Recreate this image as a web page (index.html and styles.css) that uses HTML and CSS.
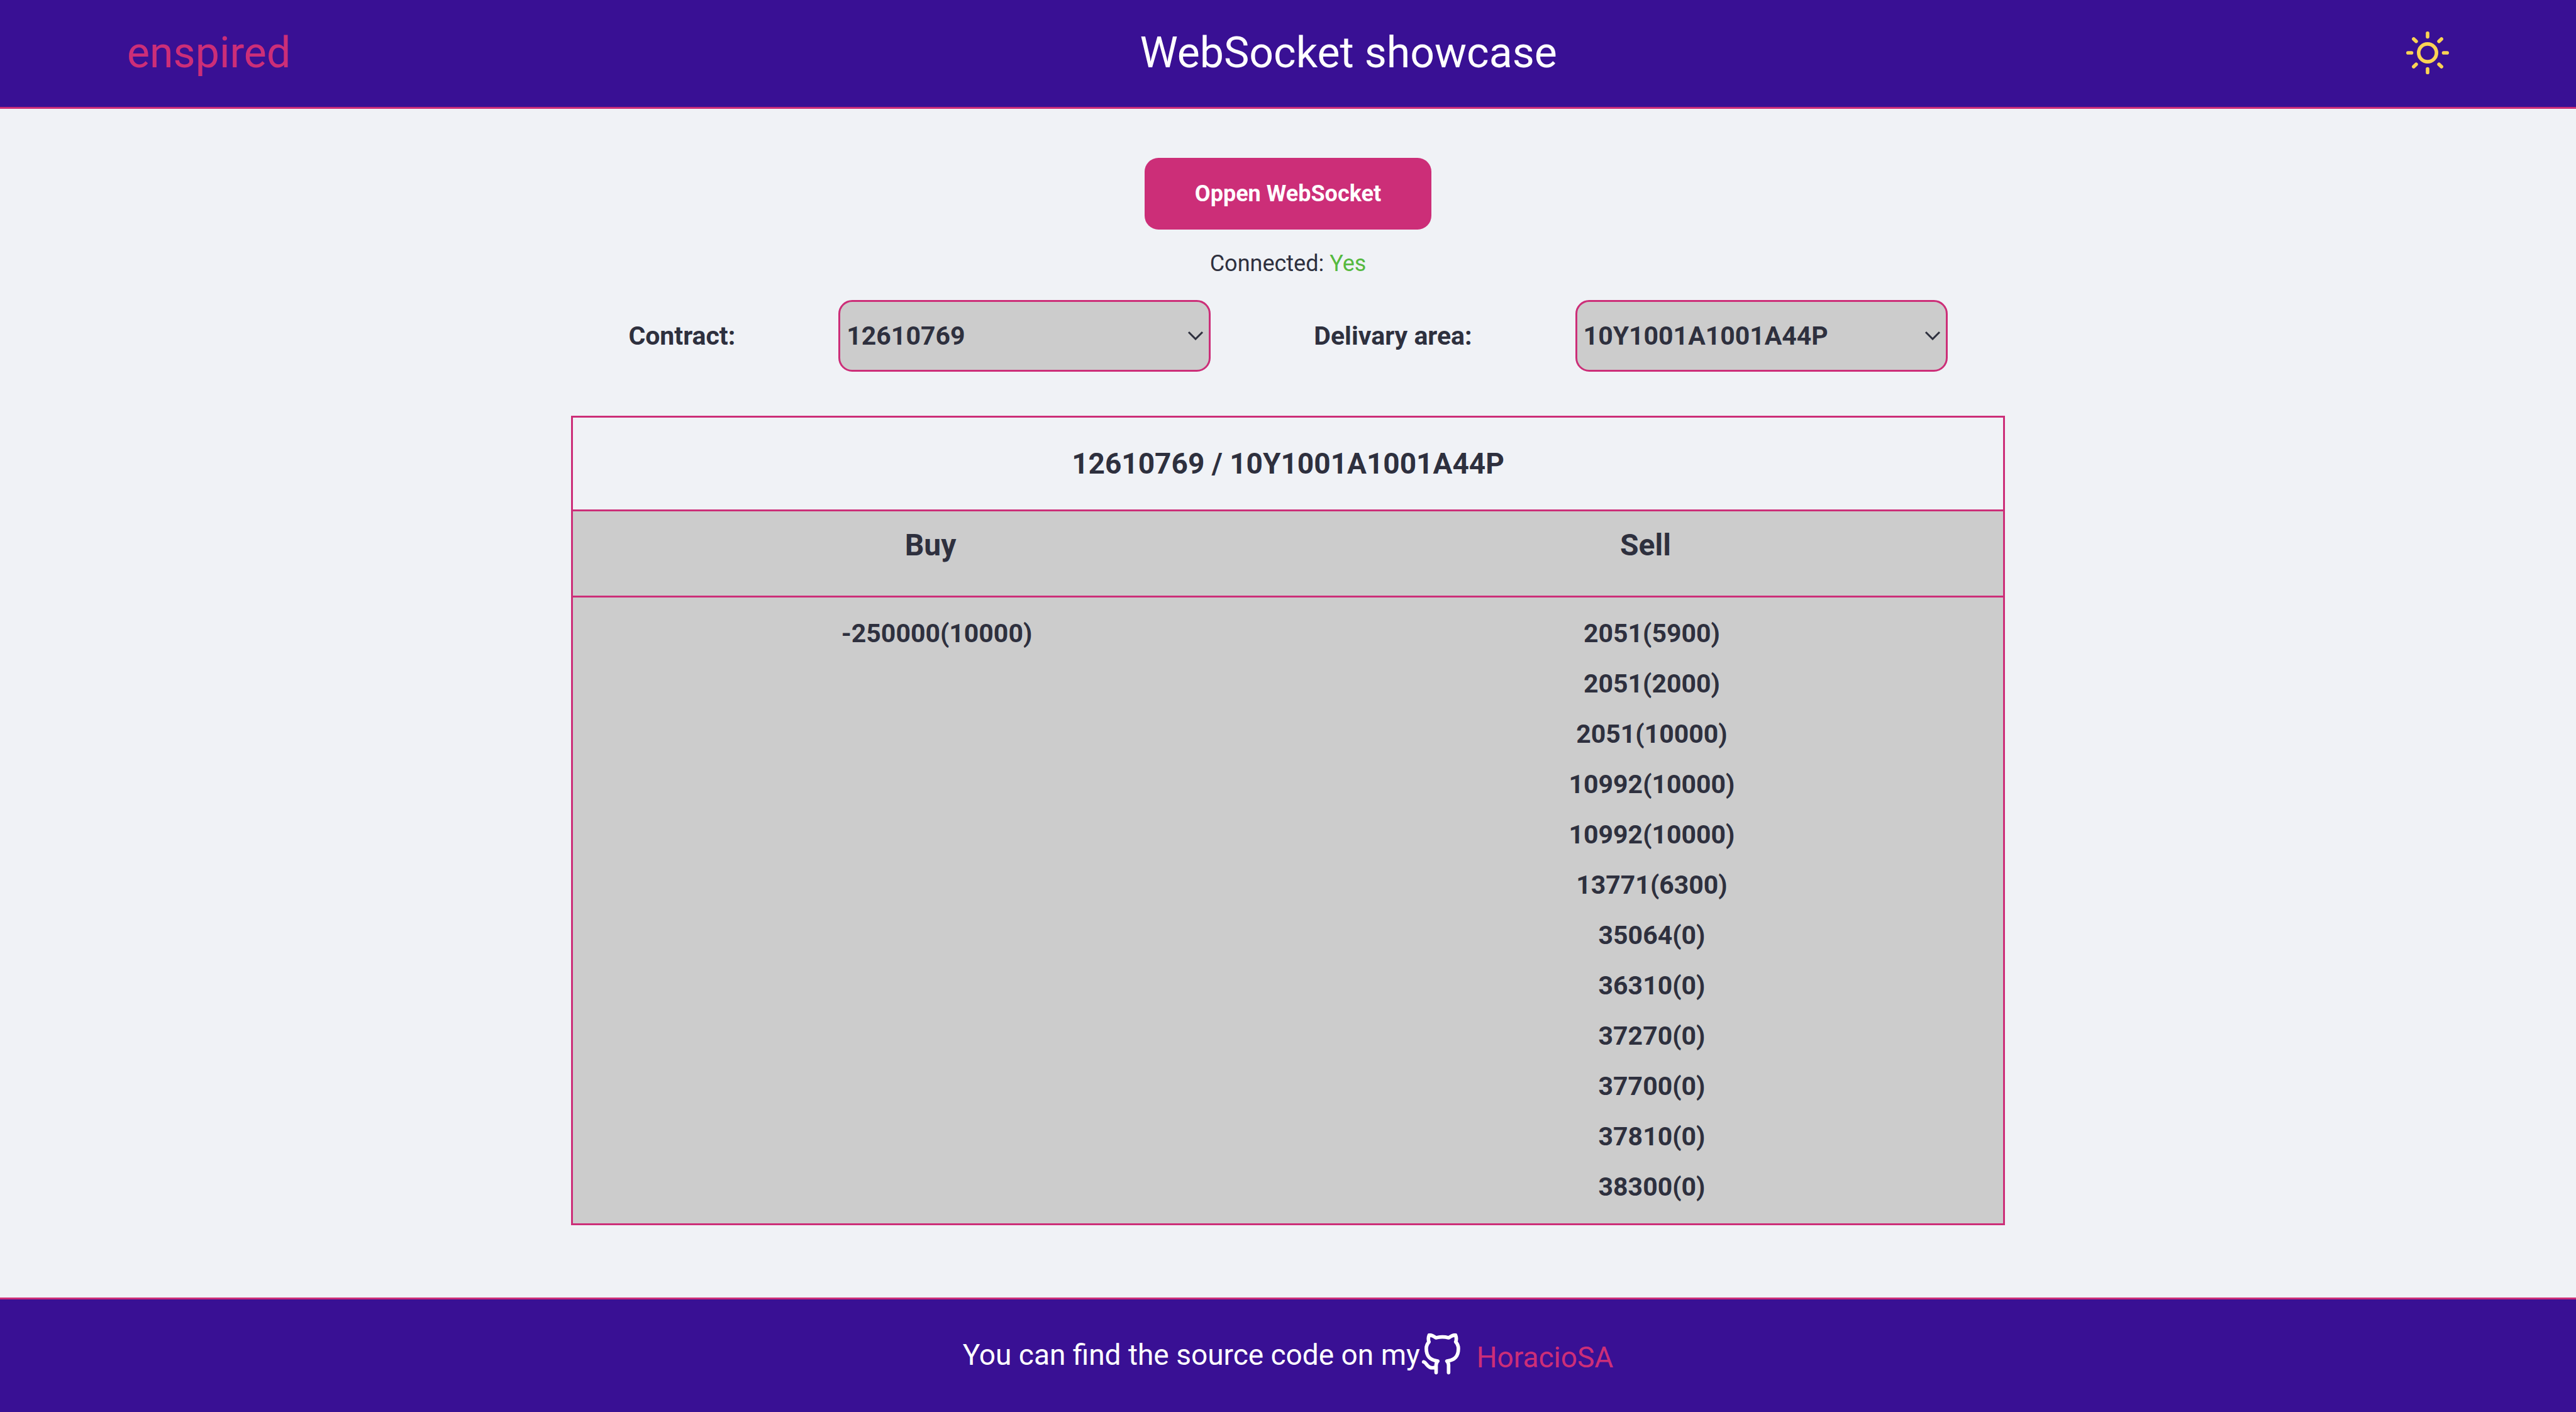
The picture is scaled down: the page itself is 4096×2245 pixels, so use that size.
FILE: index.html
```html
<!DOCTYPE html>
<html lang="en">
<head>
<meta charset="utf-8">
<meta name="viewport" content="width=device-width, initial-scale=1">
<title>WebSocket showcase</title>
<link rel="stylesheet" href="styles.css">
</head>
<body>
<header class="header">
  <a class="brand" href="#">enspired</a>
  <h1 class="title">WebSocket showcase</h1>
  <button class="theme" type="button" aria-label="Toggle theme">
    <svg class="sun" viewBox="0 0 24 24" fill="none" stroke="currentColor" stroke-width="2" stroke-linecap="round" aria-hidden="true">
      <circle cx="12" cy="12" r="5"/>
      <path d="M12 1v2M12 21v2M1 12h2M21 12h2M4.2 4.2l1.4 1.4M18.4 18.4l1.4 1.4M4.2 19.8l1.4-1.4M18.4 5.6l1.4-1.4"/>
    </svg>
  </button>
</header>
<main class="main">
  <button class="open" type="button">Oppen WebSocket</button>
  <p class="status">Connected: <span class="yes">Yes</span></p>
  <form class="filters">
    <label class="label" for="contract">Contract:</label>
    <div class="picker">
      <select class="select" id="contract"><option>12610769</option></select>
      <svg class="chevron" viewBox="0 0 28 16" aria-hidden="true"><path d="M3 3l11 11L25 3"/></svg>
    </div>
    <label class="label" for="area">Delivary area:</label>
    <div class="picker">
      <select class="select" id="area"><option>10Y1001A1001A44P</option></select>
      <svg class="chevron" viewBox="0 0 28 16" aria-hidden="true"><path d="M3 3l11 11L25 3"/></svg>
    </div>
  </form>
  <table class="book">
    <caption class="caption">12610769 / 10Y1001A1001A44P</caption>
    <thead>
      <tr><th scope="col">Buy</th><th scope="col">Sell</th></tr>
    </thead>
    <tbody>
      <tr><td>-250000(10000)</td><td>2051(5900)</td></tr>
      <tr><td></td><td>2051(2000)</td></tr>
      <tr><td></td><td>2051(10000)</td></tr>
      <tr><td></td><td>10992(10000)</td></tr>
      <tr><td></td><td>10992(10000)</td></tr>
      <tr><td></td><td>13771(6300)</td></tr>
      <tr><td></td><td>35064(0)</td></tr>
      <tr><td></td><td>36310(0)</td></tr>
      <tr><td></td><td>37270(0)</td></tr>
      <tr><td></td><td>37700(0)</td></tr>
      <tr><td></td><td>37810(0)</td></tr>
      <tr><td></td><td>38300(0)</td></tr>
    </tbody>
  </table>
</main>
<footer class="footer">
  <p class="source">You can find the source code on my</p>
  <a class="author" href="#">
    <svg class="github" viewBox="0 0 24 24" fill="none" stroke="currentColor" stroke-width="2" stroke-linecap="round" stroke-linejoin="round" aria-hidden="true">
      <path d="M9 19c-5 1.5-5-2.5-7-3m14 6v-3.87a3.37 3.37 0 0 0-.94-2.61c3.14-.35 6.44-1.54 6.44-7A5.44 5.44 0 0 0 20 4.77 5.07 5.07 0 0 0 19.91 1S18.73.65 16 2.48a13.38 13.38 0 0 0-7 0C6.27.65 5.09 1 5.09 1A5.07 5.07 0 0 0 5 4.77a5.44 5.44 0 0 0-1.5 3.78c0 5.42 3.3 6.61 6.44 7A3.37 3.37 0 0 0 9 18.13V22"/>
    </svg>
    <span>HoracioSA</span>
  </a>
</footer>
</body>
</html>
```
FILE: styles.css
```css
:root {
  --purple: #391094;
  --pink: #cc2e78;
  --page: #f0f2f6;
  --grey: #cccccc;
  --ink: #2e303e;
}

* {
  box-sizing: border-box;
}

body {
  margin: 0;
  min-height: 100vh;
  display: flex;
  flex-direction: column;
  background: var(--page);
  color: var(--ink);
  font-family: Roboto, "Liberation Sans", sans-serif;
  font-size: 36px;
  line-height: 44px;
}

.header {
  display: flex;
  justify-content: space-between;
  align-items: center;
  height: 173px;
  padding: 0 202px 3px;
  background: var(--purple);
  border-bottom: 3px solid var(--pink);
}

.brand,
.title {
  margin: 0;
  font-size: 68px;
  font-weight: 400;
  line-height: 80px;
}

.brand {
  color: var(--pink);
  text-decoration: none;
}

.title {
  color: #fff;
}

.theme {
  padding: 0;
  border: 0;
  background: none;
  color: #fbd354;
}

.sun {
  display: block;
  width: 68px;
  height: 68px;
}

.main {
  flex: 1;
  display: flex;
  flex-direction: column;
  align-items: center;
  padding-top: 78px;
}

.open {
  width: 456px;
  height: 114px;
  border: 0;
  border-radius: 22px;
  background: var(--pink);
  color: #fff;
  font: 700 36px/44px Roboto, "Liberation Sans", sans-serif;
}

.status {
  margin: 32px 0 36px;
}

.yes {
  color: #56b93f;
}

.filters {
  display: flex;
  justify-content: center;
  align-items: center;
  gap: 164px;
}

.label {
  font-size: 41px;
  font-weight: 700;
  line-height: 50px;
}

.picker {
  position: relative;
  width: 592px;
}

.select {
  appearance: none;
  display: block;
  width: 100%;
  height: 114px;
  padding: 0 10px;
  border: 3px solid var(--pink);
  border-radius: 22px;
  background: var(--grey);
  color: var(--ink);
  font: 700 41px/50px Roboto, "Liberation Sans", sans-serif;
}

.chevron {
  position: absolute;
  right: 10px;
  top: 48px;
  width: 28px;
  height: 16px;
  fill: none;
  stroke: var(--ink);
  stroke-width: 3px;
  pointer-events: none;
}

.book {
  width: 2280px;
  max-width: 100%;
  margin-top: 70px;
  border: 3px solid var(--pink);
  border-top: 0;
  border-spacing: 0;
  table-layout: fixed;
  background: var(--grey);
  font-weight: 700;
  text-align: center;
}

.caption {
  padding: 45px 0;
  border: 3px solid var(--pink);
  background: var(--page);
  font-size: 46px;
  line-height: 56px;
}

.book th {
  height: 137px;
  padding: 26px 0 52px;
  border-bottom: 3px solid var(--pink);
  font-size: 48px;
  line-height: 56px;
}

.book td {
  padding: 15px 0 15px 20px;
  font-size: 41px;
  line-height: 50px;
}

.book tbody tr:first-child td {
  padding-top: 32px;
}

.book tbody tr:last-child td {
  padding-bottom: 33px;
}

.footer {
  display: flex;
  justify-content: center;
  align-items: center;
  height: 182px;
  padding-bottom: 4px;
  border-top: 3px solid var(--pink);
  background: var(--purple);
  color: #fff;
  font-size: 46px;
  line-height: 60px;
}

.source {
  margin: 0;
}

.author {
  display: flex;
  align-items: flex-end;
  gap: 22px;
  color: var(--pink);
  text-decoration: none;
}

.github {
  width: 68px;
  height: 68px;
  color: #fff;
}
```
